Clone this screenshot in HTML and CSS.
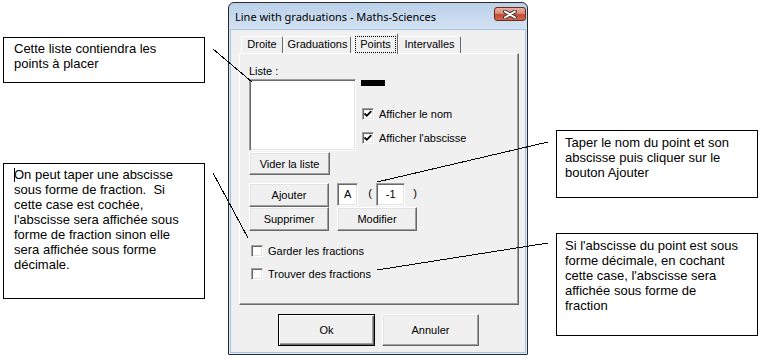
FILE: index.html
```html
<!DOCTYPE html>
<html lang="fr">
<head>
  <meta charset="UTF-8">
  <meta name="viewport" content="width=device-width, initial-scale=1.0">
  <title>Line with graduations - Points</title>
  <link rel="stylesheet" href="styles.css">
</head>
<body>

<div class="notes notes-left">
  <div class="note note-list">Cette liste contiendra les<br>points à placer</div>
  <div class="note note-frac"><span class="caret"></span>On peut taper une abscisse<br>sous forme de fraction.&nbsp; Si<br>cette case est cochée,<br>l'abscisse sera affichée sous<br>forme de fraction sinon elle<br>sera affichée sous forme<br>décimale.</div>
</div>

<div class="dialog">
  <div class="titlebar">
    <span class="title">Line with graduations - Maths-Sciences</span>
    <span class="close">
      <svg width="14" height="9" viewBox="0 0 14 9">
        <path d="M2 1.5 L12 7.5 M12 1.5 L2 7.5" stroke="#4a3a36" stroke-width="4" stroke-linecap="round"/>
        <path d="M2 1.5 L12 7.5 M12 1.5 L2 7.5" stroke="#fff" stroke-width="2" stroke-linecap="round"/>
      </svg>
    </span>
  </div>

  <div class="client">
    <div class="tabs">
      <span class="tab tab-droite">Droite</span>
      <span class="tab tab-grad">Graduations</span>
      <span class="tab tab-points active"><span class="focus">Points</span></span>
      <span class="tab tab-inter">Intervalles</span>
    </div>

    <div class="panel">
      <div class="field-label">Liste :</div>
      <div class="list-row">
        <div class="listbox"></div>
        <div class="side">
          <div class="swatch"></div>
          <label class="check check-nom"><span class="box"><svg width="10" height="10" viewBox="0 0 10 10"><path d="M1.5 4.5 L3.8 6.8 L8.3 2.2" fill="none" stroke="#000" stroke-width="1.8"/></svg></span>Afficher le nom</label>
          <label class="check check-abs"><span class="box"><svg width="10" height="10" viewBox="0 0 10 10"><path d="M1.5 4.5 L3.8 6.8 L8.3 2.2" fill="none" stroke="#000" stroke-width="1.8"/></svg></span>Afficher l'abscisse</label>
        </div>
      </div>
      <button type="button" class="btn btn-vider">Vider la liste</button>

      <div class="edit-grid">
        <button type="button" class="btn">Ajouter</button>
        <div class="point-entry">
          <span class="textbox tb-name">A</span>
          <span class="paren paren-open">(</span>
          <span class="textbox tb-abs">-1</span>
          <span class="paren paren-close">)</span>
        </div>
        <button type="button" class="btn">Supprimer</button>
        <button type="button" class="btn">Modifier</button>
      </div>

      <label class="check check-garder"><span class="box"></span>Garder les fractions</label>
      <label class="check check-trouver"><span class="box"></span>Trouver des fractions</label>
    </div>

    <div class="actions">
      <button type="button" class="btn btn-big btn-default">Ok</button>
      <button type="button" class="btn btn-big">Annuler</button>
    </div>
  </div>
</div>

<div class="notes notes-right">
  <div class="note note-ajout">Taper le nom du point et son<br>abscisse puis cliquer sur le<br>bouton Ajouter</div>
  <div class="note note-decimal">Si l'abscisse du point est sous<br>forme décimale, en cochant<br>cette case, l'abscisse sera<br>affichée sous forme de<br>fraction</div>
</div>

<!-- leader lines from the notes to the controls -->
<svg class="leaders" width="761" height="358" viewBox="0 0 761 358">
  <g stroke="#000" stroke-width="1" shape-rendering="crispEdges">
    <line x1="213" y1="49" x2="252" y2="82"/>
    <line x1="213" y1="173" x2="248" y2="238"/>
    <line x1="548" y1="142" x2="377" y2="182"/>
    <line x1="548" y1="243" x2="377" y2="270"/>
  </g>
</svg>

</body>
</html>
```

FILE: styles.css
```css
* {
  box-sizing: border-box;
}
body {
  margin: 0;
  width: 761px;
  height: 358px;
  position: relative;
  overflow: hidden;
  background: #fff;
  display: flex;
  align-items: flex-start;
  font-family: "Liberation Sans", Arial, sans-serif;
  font-size: 11px;
  color: #000;
}

/* notes */
.notes {
  display: flex;
  flex-direction: column;
  width: 202px;
}
.notes-left {
  margin-left: 3px;
}
.notes-right {
  margin-left: 28px;
}
.note {
  border: 1px solid #000;
  background: #fff;
  font-size: 13px;
  line-height: 15px;
  padding: 3px 0 0 10px;
  white-space: nowrap;
}
.notes-right .note {
  padding: 4px 0 0 8px;
}
.note-list {
  margin-top: 37px;
  height: 46px;
}
.note-frac {
  margin-top: 80px;
  height: 136px;
}
.note-ajout {
  margin-top: 130px;
  height: 68px;
}
.note-decimal {
  margin-top: 35px;
  height: 103px;
}
.caret {
  display: inline-block;
  width: 1px;
  height: 14px;
  margin-right: -1px;
  background: #000;
  vertical-align: -3px;
}

/* dialog window */
.dialog {
  margin: 2px 0 0 23px;
  width: 300px;
  height: 353px;
  border: 1px solid #2b2b2b;
  border-radius: 6px 6px 1px 1px;
  background: linear-gradient(#bad1ea, #d6e4f3 30px, #dde9f5);
  display: flex;
  flex-direction: column;
}
.titlebar {
  height: 26px;
  display: flex;
  align-items: center;
  padding: 0 1px 0 6px;
}
.title {
  flex: 1;
  font-family: "Noto Sans", sans-serif;
  font-size: 11px;
  color: #000;
}
.close {
  align-self: flex-start;
  margin-top: 4px;
  width: 32px;
  height: 14px;
  border: 1px solid #6b2a1c;
  border-radius: 3px;
  background: linear-gradient(#eab0a2, #d98a78 45%, #c44a32 55%, #d2664e);
  display: flex;
  align-items: center;
  justify-content: center;
}
.client {
  flex: 1;
  margin: 0 1px 1px;
  border: 1px solid #a4c4e4;
  background: #f0f0f0;
  padding-top: 3px;
}

/* tabs */
.tabs {
  display: flex;
  align-items: flex-end;
  height: 20px;
  margin-left: 8px;
}
.tab {
  height: 17px;
  border: 1px solid;
  border-color: #fff #696969 transparent #fff;
  border-bottom: none;
  border-radius: 2px 2px 0 0;
  line-height: 15px;
  text-align: center;
  background: #f0f0f0;
}
.tab-droite {
  width: 42px;
  margin-left: 2px;
}
.tab-grad {
  width: 67px;
  margin-left: 1px;
}
.tab-points {
  width: 45px;
  margin-left: 2px;
}
.tab-inter {
  width: 63px;
}
.tab.active {
  position: relative;
  z-index: 1;
  height: 21px;
  margin-bottom: -1px;
}
.focus {
  display: block;
  height: 17px;
  margin: 2px 1px 0;
  border: 1px dotted #000;
  line-height: 14px;
}

/* tab page */
.panel {
  margin-left: 8px;
  width: 280px;
  height: 252px;
  border: 1px solid;
  border-color: #fff #696969 #696969 #fff;
  box-shadow: inset -1px -1px 0 #a0a0a0;
  padding: 11px 0 0 9px;
}
.field-label {
  line-height: 13px;
}
.list-row {
  display: flex;
  align-items: flex-start;
  margin-top: 1px;
}
.listbox,
.textbox,
.box {
  background: #fff;
  border: 1px solid;
  border-color: #a0a0a0 #fff #fff #a0a0a0;
  box-shadow: inset 1px 1px 0 #696969, inset -1px -1px 0 #e3e3e3;
}
.listbox {
  width: 107px;
  height: 72px;
}
.side {
  margin-left: 5px;
}
.swatch {
  margin-top: 1px;
  width: 24px;
  height: 6px;
  background: #000;
}
.check {
  display: flex;
  align-items: center;
  height: 12px;
  line-height: 12px;
  white-space: nowrap;
}
.box {
  width: 12px;
  height: 12px;
  margin-right: 5px;
  display: flex;
  align-items: center;
  justify-content: center;
}
.check-nom {
  margin: 22px 0 0 1px;
}
.check-abs {
  margin: 12px 0 0 1px;
}
.check-garder {
  margin: 14px 0 0 2px;
}
.check-trouver {
  margin: 11px 0 0 2px;
}

/* buttons */
.btn {
  display: block;
  padding: 0;
  font: inherit;
  color: #000;
  background: #f0f0f0;
  border: 1px solid;
  border-color: #fff #696969 #696969 #fff;
  box-shadow: inset -1px -1px 0 #a0a0a0, inset 1px 1px 0 #e3e3e3;
  border-radius: 0;
  text-align: center;
}
.btn-vider {
  margin-top: 1px;
  width: 81px;
  height: 23px;
}
.edit-grid {
  display: grid;
  grid-template-columns: 80px 80px;
  grid-auto-rows: 24px;
  column-gap: 8px;
  margin-top: 8px;
}
.point-entry {
  display: flex;
  align-items: flex-start;
}
.textbox {
  height: 23px;
  line-height: 20px;
  text-align: center;
}
.tb-name {
  width: 23px;
}
.tb-abs {
  width: 32px;
}
.paren {
  line-height: 21px;
}
.paren-open {
  margin: 0 4px 0 10px;
}
.paren-close {
  margin-left: 8px;
}

.actions {
  display: flex;
  gap: 7px;
  margin-top: 9px;
  padding-left: 47px;
}
.btn-big {
  width: 97px;
  height: 32px;
}
.btn-default {
  border-color: #000;
  box-shadow: inset 1px 1px 0 #fff, inset -1px -1px 0 #696969, inset -2px -2px 0 #a0a0a0;
}

.leaders {
  position: absolute;
  left: 0;
  top: 0;
  pointer-events: none;
}
```
